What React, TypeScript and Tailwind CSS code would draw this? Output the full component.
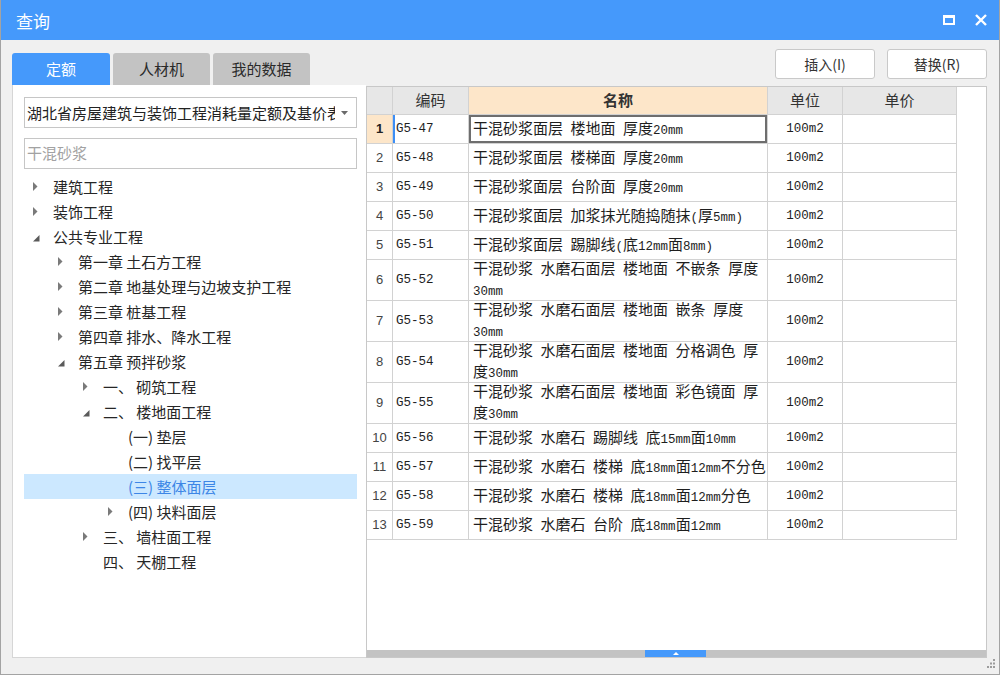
import React from 'react';

type TreeNode = { level: number; text: string; state: 'open' | 'closed' | 'leaf'; selected?: boolean };

const tree: TreeNode[] = [
  { level: 0, text: '建筑工程', state: 'closed' },
  { level: 0, text: '装饰工程', state: 'closed' },
  { level: 0, text: '公共专业工程', state: 'open' },
  { level: 1, text: '第一章 土石方工程', state: 'closed' },
  { level: 1, text: '第二章 地基处理与边坡支护工程', state: 'closed' },
  { level: 1, text: '第三章 桩基工程', state: 'closed' },
  { level: 1, text: '第四章 排水、降水工程', state: 'closed' },
  { level: 1, text: '第五章 预拌砂浆', state: 'open' },
  { level: 2, text: '一、 砌筑工程', state: 'closed' },
  { level: 2, text: '二、 楼地面工程', state: 'open' },
  { level: 3, text: '(一) 垫层', state: 'leaf' },
  { level: 3, text: '(二) 找平层', state: 'leaf' },
  { level: 3, text: '(三) 整体面层', state: 'leaf', selected: true },
  { level: 3, text: '(四) 块料面层', state: 'closed' },
  { level: 2, text: '三、 墙柱面工程', state: 'closed' },
  { level: 2, text: '四、 天棚工程', state: 'leaf' },
];

const indent = ['pl-[9px]', 'pl-[34px]', 'pl-[59px]', 'pl-[84px]'];

const rows = [
  { code: 'G5-47', name: '干混砂浆面层 楼地面 厚度20mm' },
  { code: 'G5-48', name: '干混砂浆面层 楼梯面 厚度20mm' },
  { code: 'G5-49', name: '干混砂浆面层 台阶面 厚度20mm' },
  { code: 'G5-50', name: '干混砂浆面层 加浆抹光随捣随抹(厚5mm)' },
  { code: 'G5-51', name: '干混砂浆面层 踢脚线(底12mm面8mm)' },
  { code: 'G5-52', name: '干混砂浆 水磨石面层 楼地面 不嵌条 厚度\n30mm' },
  { code: 'G5-53', name: '干混砂浆 水磨石面层 楼地面 嵌条 厚度\n30mm' },
  { code: 'G5-54', name: '干混砂浆 水磨石面层 楼地面 分格调色 厚\n度30mm' },
  { code: 'G5-55', name: '干混砂浆 水磨石面层 楼地面 彩色镜面 厚\n度30mm' },
  { code: 'G5-56', name: '干混砂浆 水磨石 踢脚线 底15mm面10mm' },
  { code: 'G5-57', name: '干混砂浆 水磨石 楼梯 底18mm面12mm不分色' },
  { code: 'G5-58', name: '干混砂浆 水磨石 楼梯 底18mm面12mm分色' },
  { code: 'G5-59', name: '干混砂浆 水磨石 台阶 底18mm面12mm' },
];

const mono = "font-['Liberation_Mono',monospace]";
const line = 'border-r border-b border-[#d2d2d2]';

/** 中文与半角字符混排 */
function Mixed({ text }: { text: string }) {
  return (
    <div className="leading-[18px]">
      {text.split('\n').map((ln, i) => (
        <div key={i} className="whitespace-pre">
          {ln.split(/([\x20-\x7e]+)/).map((part, j) =>
            /^[\x20-\x7e]+$/.test(part) ? (
              <span key={j} className={`${mono} text-[12.5px]`}>{part}</span>
            ) : (
              <span key={j}>{part}</span>
            ),
          )}
        </div>
      ))}
    </div>
  );
}

function Caret({ state }: { state: TreeNode['state'] }) {
  if (state === 'closed')
    return (
      <svg width="5" height="9" viewBox="0 0 5 9">
        <polygon points="0,0 4.5,4.5 0,9" fill="#7a7a7a" />
      </svg>
    );
  if (state === 'open')
    return (
      <svg width="7" height="7" viewBox="0 0 7 7" className="mt-[3px]">
        <polygon points="6.5,0 6.5,6.5 0,6.5" fill="#5a5a5a" />
      </svg>
    );
  return null;
}

function LeftPanel() {
  return (
    <div className="w-[354px] h-full bg-white border-l border-b border-[#d6d6d6] pl-[11px] pr-[9px] pt-[12px] flex flex-col">
      <div className="h-[31px] border border-[#c6c6c6] flex items-center pl-[2px] pr-[8px] gap-[6px]">
        <div className="flex-1 overflow-hidden whitespace-nowrap text-[15px] leading-[22px] text-[#222]">
          湖北省房屋建筑与装饰工程消耗量定额及基价表
        </div>
        <svg width="7" height="4" viewBox="0 0 7 4">
          <polygon points="0,0 7,0 3.5,4" fill="#6a6a6a" />
        </svg>
      </div>
      <div className="h-[31px] mt-[10px] border border-[#c6c6c6] flex items-center pl-[2px] text-[15px] text-[#a2a2a2]">
        干混砂浆
      </div>
      <div className="mt-[5px]">
        {tree.map((n, i) => (
          <div
            key={i}
            className={`h-[25px] flex items-center ${indent[n.level]} ${n.selected ? 'bg-[#cce8ff] text-[#3d86e6]' : 'text-[#262626]'}`}
          >
            <div className="w-[20px] flex items-center">
              <Caret state={n.state} />
            </div>
            <span className="text-[15px] leading-[20px] whitespace-pre">{n.text}</span>
          </div>
        ))}
      </div>
    </div>
  );
}

function Table() {
  return (
    <div className="w-[590px]">
      <div className="flex h-[28px] bg-[#e7e7e7] text-[15px]">
        <div className={`w-[26px] ${line}`} />
        <div className={`w-[76px] ${line} flex items-center justify-center`}>编码</div>
        <div className={`w-[299px] ${line} flex items-center justify-center bg-[#fde6c9] font-bold`}>名称</div>
        <div className={`w-[75px] ${line} flex items-center justify-center`}>单位</div>
        <div className={`w-[114px] ${line} flex items-center justify-center`}>单价</div>
      </div>
      {rows.map((r, i) => {
        const tall = r.name.includes('\n');
        const first = i === 0;
        return (
          <div key={r.code} className={`flex ${tall ? 'h-[41px]' : 'h-[29px]'} text-[15px] text-[#1e1e1e]`}>
            <div
              className={`w-[26px] ${line} flex items-center justify-center text-[13px] font-['Liberation_Sans',sans-serif] ${first ? 'bg-[#fde6c9] font-bold text-[#222]' : 'text-[#444]'}`}
            >
              {i + 1}
            </div>
            <div
              className={`w-[76px] ${line} flex items-center pl-[3px] ${mono} text-[12.5px] ${first ? 'shadow-[inset_2px_0_0_#3d8ef5]' : ''}`}
            >
              {r.code}
            </div>
            <div
              className={`w-[299px] ${line} flex items-center pl-[4px] ${first ? 'shadow-[inset_0_0_0_2px_#6e6e6e]' : ''}`}
            >
              <Mixed text={r.name} />
            </div>
            <div className={`w-[75px] ${line} flex items-center justify-center ${mono} text-[12.5px]`}>100m2</div>
            <div className={`w-[114px] ${line}`} />
          </div>
        );
      })}
    </div>
  );
}

function RightPanel() {
  return (
    <div className="w-[621px] h-[572px] mt-[1px] bg-white border border-[#c8c8c8] flex flex-col">
      <div className="flex-1 min-h-0">
        <Table />
      </div>
      <div className="h-[7px] bg-[#c3c3c3] flex">
        <div className="w-[278px]" />
        <div className="w-[61px] h-full bg-[#4599fb] flex items-center justify-center">
          <svg width="6" height="3" viewBox="0 0 6 3">
            <polygon points="0,3 3,0 6,3" fill="#fff" />
          </svg>
        </div>
      </div>
    </div>
  );
}

export default function App() {
  return (
    <div className="relative w-[1000px] h-[675px] flex flex-col bg-[#f0f0f0] border-x border-b border-[#a3a3a3] font-['Noto_Sans_CJK_SC',sans-serif] text-[#333] overflow-hidden">
      {/* 标题栏 */}
      <div className="h-[40px] shrink-0 bg-[#4599fb] flex items-center justify-between pl-[15px] pr-[12px]">
        <span className="text-[17px] text-white leading-[22px] pt-[2px]">查询</span>
        <div className="flex items-center gap-[20px]">
          <div className="w-[12px] h-[10px] border-2 border-t-[3px] border-white" />
          <svg width="12" height="12" viewBox="0 0 12 12">
            <path d="M1 1 L11 11 M11 1 L1 11" stroke="#fff" strokeWidth="2.4" />
          </svg>
        </div>
      </div>

      <div className="flex-1 flex flex-col pl-[11px] pr-[12px]">
        <div className="h-[45px] shrink-0 flex justify-between">
          <div className="flex items-end gap-[3px] text-[15px]">
            <div className="w-[98px] h-[32px] rounded-t-[3px] bg-[#4599fb] text-white flex items-center justify-center">定额</div>
            <div className="w-[97px] h-[32px] rounded-t-[3px] bg-[#c3c3c3] text-[#2a2a2a] flex items-center justify-center">人材机</div>
            <div className="w-[97px] h-[32px] rounded-t-[3px] bg-[#c3c3c3] text-[#2a2a2a] flex items-center justify-center">我的数据</div>
          </div>
          <div className="flex gap-[12px] mt-[9px] text-[14px]">
            <button className="w-[100px] h-[30px] bg-white border border-[#c9c9c9] rounded-[3px] text-[#333]">插入(I)</button>
            <button className="w-[100px] h-[30px] bg-white border border-[#c9c9c9] rounded-[3px] text-[#333]">替换(R)</button>
          </div>
        </div>

        <div className="flex h-[573px] items-start">
          <LeftPanel />
          <RightPanel />
        </div>
      </div>

      {/* 右下角拖拽 */}
      <svg width="9" height="9" viewBox="0 0 9 9" className="absolute right-[4px] bottom-[6px]">
        <rect x="7" y="0" width="2" height="2" fill="#9c9c9c" />
        <rect x="4" y="3.5" width="2" height="2" fill="#9c9c9c" />
        <rect x="7" y="3.5" width="2" height="2" fill="#9c9c9c" />
        <rect x="1" y="7" width="2" height="2" fill="#9c9c9c" />
        <rect x="4" y="7" width="2" height="2" fill="#9c9c9c" />
        <rect x="7" y="7" width="2" height="2" fill="#9c9c9c" />
      </svg>
    </div>
  );
}
